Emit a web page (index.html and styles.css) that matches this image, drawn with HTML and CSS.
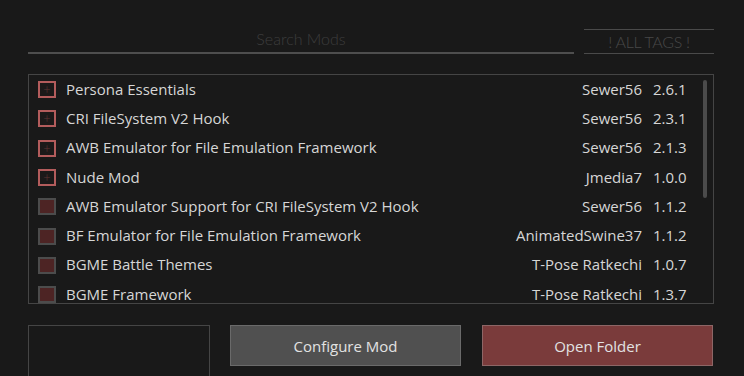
FILE: index.html
```html
<!DOCTYPE html>
<html lang="en">
<head>
    <meta charset="UTF-8">
    <title>Mod Manager</title>
    <link rel="stylesheet" href="styles.css">
</head>
<body>
    <div class="page">
        <div class="top-bar">
            <div class="search">Search Mods</div>
            <div class="tags">! ALL TAGS !</div>
        </div>

        <div class="mod-list">
            <div class="rows">
                <div class="row">
                    <span class="check open">+</span>
                    <span class="name">Persona Essentials</span>
                    <span class="author">Sewer56</span>
                    <span class="version">2.6.1</span>
                </div>
                <div class="row">
                    <span class="check open">+</span>
                    <span class="name">CRI FileSystem V2 Hook</span>
                    <span class="author">Sewer56</span>
                    <span class="version">2.3.1</span>
                </div>
                <div class="row">
                    <span class="check open">+</span>
                    <span class="name">AWB Emulator for File Emulation Framework</span>
                    <span class="author">Sewer56</span>
                    <span class="version">2.1.3</span>
                </div>
                <div class="row">
                    <span class="check open">+</span>
                    <span class="name">Nude Mod</span>
                    <span class="author">Jmedia7</span>
                    <span class="version">1.0.0</span>
                </div>
                <div class="row">
                    <span class="check"></span>
                    <span class="name">AWB Emulator Support for CRI FileSystem V2 Hook</span>
                    <span class="author">Sewer56</span>
                    <span class="version">1.1.2</span>
                </div>
                <div class="row">
                    <span class="check"></span>
                    <span class="name">BF Emulator for File Emulation Framework</span>
                    <span class="author">AnimatedSwine37</span>
                    <span class="version">1.1.2</span>
                </div>
                <div class="row">
                    <span class="check"></span>
                    <span class="name">BGME Battle Themes</span>
                    <span class="author">T-Pose Ratkechi</span>
                    <span class="version">1.0.7</span>
                </div>
                <div class="row">
                    <span class="check"></span>
                    <span class="name">BGME Framework</span>
                    <span class="author">T-Pose Ratkechi</span>
                    <span class="version">1.3.7</span>
                </div>
            </div>
            <div class="scroll-track">
                <div class="scroll-thumb"></div>
            </div>
        </div>

        <div class="bottom-bar">
            <div class="preview"></div>
            <button class="configure">Configure Mod</button>
            <button class="open-folder">Open Folder</button>
        </div>
    </div>
</body>
</html>
```

FILE: styles.css
```css
body {
    margin: 0;
    background-color: #191919;
    font-family: "Open Sans", "Noto Sans", sans-serif;
    color: #d6d6d6;
    overflow: hidden;
}

.page {
    width: 686px;
    padding: 29px 0 0 28px;
}

.top-bar {
    display: flex;
    align-items: flex-end;
    gap: 10px;
}

.search {
    box-sizing: border-box;
    width: 546px;
    height: 24px;
    padding-bottom: 4px;
    border-bottom: 2px solid #4e4e4e;
    text-align: center;
    font-family: Lato, sans-serif;
    font-weight: 300;
    font-size: 16px;
    line-height: 18px;
    color: #3d3d3d;
}

.tags {
    box-sizing: border-box;
    flex: 1;
    height: 25px;
    padding-top: 3px;
    border-top: 1px solid #4a4a4a;
    border-bottom: 1px solid #4a4a4a;
    text-align: center;
    font-family: Lato, sans-serif;
    font-weight: 300;
    font-size: 16px;
    letter-spacing: -0.3px;
    line-height: 18px;
    color: #484848;
}

.mod-list {
    display: flex;
    margin-top: 20px;
    height: 228px;
    border: 1px solid #454545;
    overflow: hidden;
}

.rows {
    flex: 1;
}

.row {
    box-sizing: border-box;
    display: flex;
    align-items: center;
    height: 29.3px;
    padding-bottom: 2px;
    font-size: 15px;
    line-height: 20px;
}

.check {
    box-sizing: border-box;
    width: 18px;
    height: 17px;
    margin: 2px 10px 0 9px;
    border: 2px solid #4c4c4c;
    background-color: #4d2424;
    color: #5e3333;
    font-size: 13px;
    font-weight: 300;
    line-height: 12px;
    text-align: center;
}

.check.open {
    border-color: #b35c5c;
    background-color: #1c1919;
}

.name {
    flex: 1;
    white-space: nowrap;
}

.author {
    text-align: right;
    white-space: nowrap;
}

.version {
    width: 38px;
    margin-left: 11px;
}

.scroll-track {
    width: 22px;
    padding-top: 5px;
}

.scroll-thumb {
    width: 4px;
    height: 118px;
    margin-left: 12px;
    border-radius: 2px;
    background-color: #4b4b4b;
}

.bottom-bar {
    display: flex;
    gap: 20px;
    margin-top: 21px;
}

.preview {
    width: 180px;
    height: 51px;
    border: 1px solid #454545;
    border-bottom: none;
}

.bottom-bar button {
    width: 231px;
    height: 41px;
    font-family: "Open Sans", "Noto Sans", sans-serif;
    font-size: 15px;
    color: #e2e2e2;
    cursor: pointer;
}

.configure {
    background-color: #505050;
    border: 1px solid #6a6a6a;
}

.open-folder {
    margin-left: 1px;
    background-color: #7a3b3b;
    border: 1px solid #8d6666;
}
```
